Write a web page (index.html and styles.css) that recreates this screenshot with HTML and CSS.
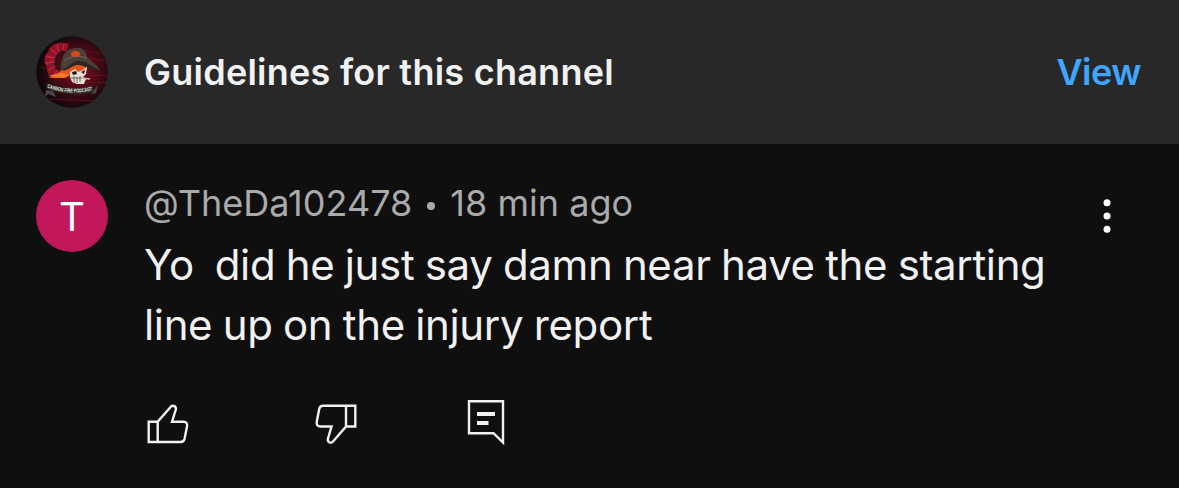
FILE: index.html
```html
<!DOCTYPE html>
<html lang="en">
<head>
    <meta charset="UTF-8">
    <meta name="viewport" content="width=device-width, initial-scale=1.0">
    <title>Comments</title>
    <link rel="stylesheet" href="styles.css">
</head>
<body>
    <header class="guidelines">
        <svg class="avatar" viewBox="0 0 72 72">
            <defs>
                <clipPath id="round"><circle cx="36" cy="36" r="36"/></clipPath>
                <radialGradient id="glow" cx="58%" cy="48%" r="52%">
                    <stop offset="0" stop-color="#8c0c20"/>
                    <stop offset=".55" stop-color="#4a0a16"/>
                    <stop offset="1" stop-color="#14090d"/>
                </radialGradient>
            </defs>
            <g clip-path="url(#round)">
                <rect width="72" height="72" fill="url(#glow)"/>
                <path d="M45 14L70 18M50 22L72 25M56 39L72 40M50 46L72 47M14 63L58 65M5 31L24 35" stroke="#7b1726" stroke-width="1" opacity=".6"/>
                <!-- feather -->
                <path d="M33 8C24 5 14 8 12 16C7 20 8 27 11 31C10 37 15 42 21 43L25 37C19 35 17 30 19 25C19 19 24 15 31 15Z" fill="#8f1427"/>
                <path d="M28 8L27 14M21 9L23 16M15 13L21 18M10 20L18 22M9 27L18 26M12 34L20 30M17 40L22 34" stroke="#c3283d" stroke-width="1.3"/>
                <path d="M27 15C19 19 18 29 23 34" fill="none" stroke="#26151b" stroke-width="2"/>
                <!-- bandana -->
                <path d="M30 30C39 28 46 26 53 29L49 36L37 38L29 42L13 42L22 37Z" fill="#e4551d"/>
                <path d="M12 40L25 37L34 39L27 42Z" fill="#f57a28"/>
                <!-- hat -->
                <path d="M25 34C25 25 27 15 35 13C43 10 50 13 51 21C55 25 61 29 64 34C54 32 46 26 39 28C34 29 30 34 25 34Z" fill="#4b4038"/>
                <path d="M25 34C32 33 34 25 43 25C51 25 56 31 64 34C53 35 48 28 41 29C34 30 32 36 25 34Z" fill="#2b2625"/>
                <path d="M28 25C34 20 43 19 51 22" fill="none" stroke="#746358" stroke-width="1"/>
                <ellipse cx="39.500" cy="18" rx="4.500" ry="3" fill="#d94a1b"/>
                <!-- skull -->
                <path d="M34 36L39 33L42 36L47 34L51 31L50 38L47 41L50 43L48 48L41 48L36 46L34 41Z" fill="#e6e0d7"/>
                <path d="M36 36L40 35L41 38L37 39ZM45 36L49 34L48 38Z" fill="#1b1214"/>
                <path d="M35 42L47 42M38 40V46M41 41V47M44 40V46" stroke="#5c4744" stroke-width=".8"/>
                <path d="M45 42L54 43" stroke="#c4bdb8" stroke-width="1.300"/>
                <!-- banner -->
                <path d="M10 54L17 55L20 61L12 58L9 61ZM57 55L62 49L60 57L55 58Z" fill="#49464a"/>
                <path d="M10 47C26 53 42 54 57 49L57 56C42 60 26 59 11 53Z" fill="#29282a"/>
                <path id="ribbon" d="M11 51.500C26 57.500 42 58 58 54" fill="none"/>
                <text class="banner-text" textLength="46" lengthAdjust="spacingAndGlyphs"><textPath href="#ribbon" textLength="46" lengthAdjust="spacingAndGlyphs">CANNON FIRE PODCAST</textPath></text>
            </g>
        </svg>
        <span class="guidelines-title">Guidelines for this channel</span>
        <a class="view">View</a>
    </header>
    <main class="comment">
        <div class="avatar letter">T</div>
        <div class="content">
            <div class="meta"><span class="handle">@TheDa102478</span><span class="dot"></span><span class="time">18 min ago</span></div>
            <p class="text"><span class="line">Yo  did he just say damn near have the starting</span><span class="line">line up on the injury report</span></p>
            <div class="actions">
                <svg class="icon" viewBox="0 0 70 66">
                    <path d="M22.700 31.700H13.700V52H22.700M22.700 31.700V52H45.500Q48.800 52 49.500 49L52 36.500Q52.700 31.700 48.500 31.700H37L40.800 19.500C41.500 16.500 38 14.500 35.800 16.800Z"/>
                </svg>
                <svg class="icon" viewBox="0 0 70 66">
                    <path d="M46 15.700H55.300V36.500H46M46 15.700V36.500L33 51.500C30.500 54 27 51.800 28 48.500L31.500 36.500H20.500Q16 36.500 16.800 31.500L19.200 19Q19.800 15.700 23.200 15.700Z"/>
                </svg>
                <svg class="icon" viewBox="0 0 70 66">
                    <path d="M19 11.200H53V52.500L43.500 43.200H19Z"/>
                    <path class="lines" d="M27 24H45M27 33H38.500"/>
                </svg>
            </div>
        </div>
        <svg class="menu" viewBox="0 0 8 36">
            <circle cx="4" cy="4.700" r="3.500"/>
            <circle cx="4" cy="18" r="3.500"/>
            <circle cx="4" cy="31.300" r="3.500"/>
        </svg>
    </main>
</body>
</html>
```
FILE: styles.css
```css
body {
    margin: 0;
    height: 488px;
    display: flex;
    flex-direction: column;
    overflow: hidden;
    background-color: #0f0f0f;
    color: #f1f1f1;
    font-family: Inter, "Liberation Sans", sans-serif;
}

.guidelines {
    box-sizing: border-box;
    height: 144px;
    padding: 0 38px 0 36px;
    display: flex;
    align-items: center;
    background-color: #282828;
    font-size: 36px;
    line-height: 44px;
}

.avatar {
    width: 72px;
    height: 72px;
    flex: none;
    border-radius: 50%;
}

.banner-text {
    font-family: "Liberation Sans", sans-serif;
    font-size: 5.5px;
    font-weight: bold;
    fill: #e7e3df;
}

.guidelines-title {
    margin: 0 0 1px 36px;
    font-weight: 600;
    letter-spacing: 0.25px;
}

.view {
    margin: 0 0 1px auto;
    color: #3ea6ff;
    font-weight: 600;
    letter-spacing: -0.5px;
}

.comment {
    flex: 1;
    padding: 36px 36px 0;
    display: flex;
    align-items: flex-start;
}

.letter {
    box-sizing: border-box;
    padding-top: 3px;
    display: flex;
    align-items: center;
    justify-content: center;
    background-color: #c2185b;
    color: #fff;
    font-family: Roboto, sans-serif;
    font-size: 40px;
    line-height: 69px;
}

.content {
    flex: 1;
    margin-left: 36px;
}

.meta {
    height: 46px;
    display: flex;
    align-items: center;
    color: #aaa;
    font-size: 36px;
    line-height: 46px;
    letter-spacing: 0.02px;
}

.dot {
    width: 8px;
    height: 8px;
    margin: 5px 15px 0 15px;
    border-radius: 50%;
    background-color: #aaa;
}

.text {
    margin: 9px 0 0;
    font-size: 42px;
    line-height: 60px;
    letter-spacing: -0.35px;
    word-spacing: -1px;
    white-space: pre;
}

.line {
    display: block;
}

.actions {
    margin: 35px 0 0 -9px;
    display: flex;
    gap: 95px;
}

.icon {
    width: 70px;
    height: 66px;
    fill: none;
    stroke: #f1f1f1;
    stroke-width: 2.4;
}

.icon:last-child {
    margin-left: -15px;
}

.icon .lines {
    stroke-width: 4;
}

.menu {
    width: 8px;
    height: 36px;
    margin: 18px 32px 0 0;
    fill: #fff;
}
```
